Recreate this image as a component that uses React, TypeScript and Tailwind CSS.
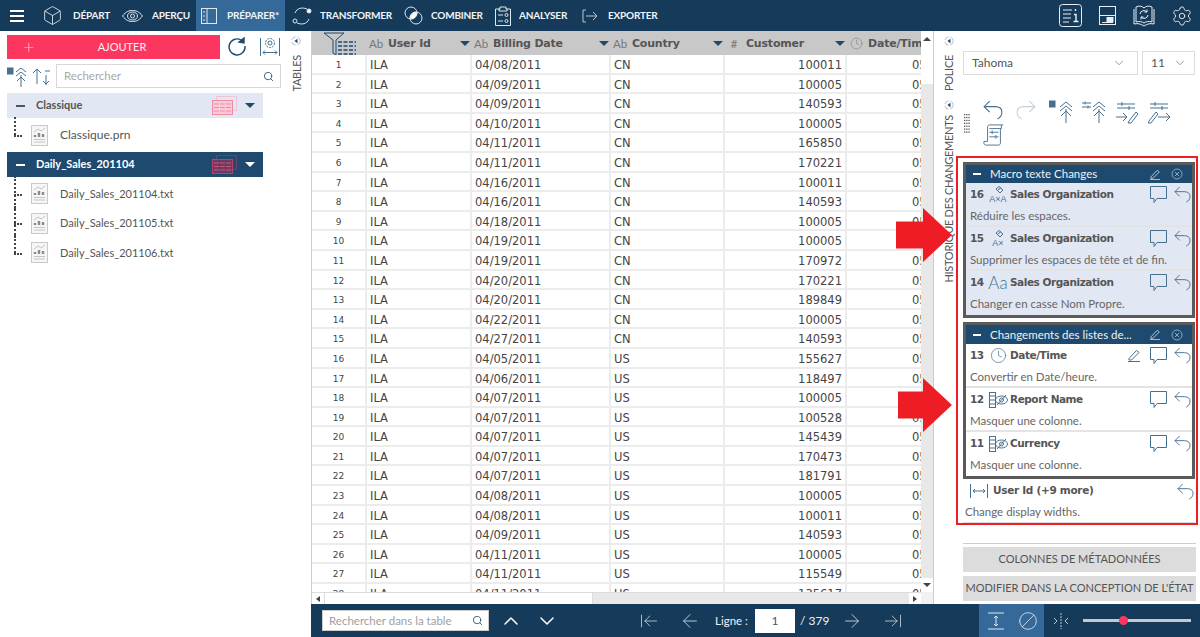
import { Search, ChevronDown, ChevronUp, Clock, Box, Settings, ArrowLeft, ArrowRight, ArrowLeftToLine, ArrowRightToLine, Ban } from 'lucide-react';

const rows: [string, string, string][] = [
    ['04/08/2011', 'CN', '100011'], ['04/09/2011', 'CN', '100005'], ['04/09/2011', 'CN', '140593'],
    ['04/10/2011', 'CN', '100005'], ['04/11/2011', 'CN', '165850'], ['04/11/2011', 'CN', '170221'],
    ['04/16/2011', 'CN', '100011'], ['04/16/2011', 'CN', '140593'], ['04/18/2011', 'CN', '100005'],
    ['04/19/2011', 'CN', '100005'], ['04/19/2011', 'CN', '170972'], ['04/20/2011', 'CN', '170221'],
    ['04/20/2011', 'CN', '189849'], ['04/22/2011', 'CN', '100005'], ['04/27/2011', 'CN', '140593'],
    ['04/05/2011', 'US', '155627'], ['04/06/2011', 'US', '118497'], ['04/07/2011', 'US', '100005'],
    ['04/07/2011', 'US', '100528'], ['04/07/2011', 'US', '145439'], ['04/07/2011', 'US', '170473'],
    ['04/07/2011', 'US', '181791'], ['04/08/2011', 'US', '100005'], ['04/08/2011', 'US', '100011'],
    ['04/09/2011', 'US', '140593'], ['04/11/2011', 'US', '100005'], ['04/11/2011', 'US', '115549'],
    ['04/11/2011', 'US', '135617'],
];

const Caret = ({ className = '' }: { className?: string }) => (
    <span className={`inline-block w-0 h-0 border-l-[5px] border-r-[5px] border-t-[5px] border-l-transparent border-r-transparent ${className}`} />
);

const CollapseDot = () => (
    <svg width="10" height="10" viewBox="0 0 10 10" className="text-[#1f4a70]">
        <circle cx="5" cy="5" r="4.2" fill="none" stroke="#9fb0c0" strokeWidth="0.8" strokeDasharray="5 2" />
        <path d="M6.5 2.8 L3.4 5 L6.5 7.2 Z" fill="currentColor" />
    </svg>
);

const UndoIcon = ({ w = 17, color = '#47708f' }: { w?: number; color?: string }) => (
    <svg width={w} height={w} viewBox="0 0 18 18" fill="none" stroke={color} strokeWidth="1">
        <path d="M6 1L1 6L6 11M1 6H11C15 6 17 8 17 11C17 14 15 16 13 17" />
    </svg>
);

const RedoIcon = ({ w = 20, color = '#c6d1da' }: { w?: number; color?: string }) => (
    <svg width={w} height={w} viewBox="0 0 18 18" fill="none" stroke={color} strokeWidth="1">
        <path d="M12 1L17 6L12 11M17 6H7C3 6 1 8 1 11C1 14 3 16 5 17" />
    </svg>
);

const CommentIcon = () => (
    <svg width="17" height="17" viewBox="0 0 17 17" fill="none" stroke="#47708f">
        <path d="M.5 .5H16.5V12.5H7L4 16.5V12.5H.5Z" />
    </svg>
);

const PencilLine = ({ w = 13, color = '#47708f' }: { w?: number; color?: string }) => (
    <svg width={w} height={w} viewBox="0 0 13 13" fill="none" stroke={color}>
        <path d="M1 9.5L8.5 1.5L11 3.5L3.5 11H1ZM0 12.5H12" />
    </svg>
);

const NavItem = ({ icon, label, w, iconW, active, className = '' }: { icon: React.ReactNode; label: string; w: number; iconW: number; active?: boolean; className?: string }) => (
    <div className={`h-full shrink-0 flex items-center ${active ? 'bg-[#34699a]' : ''} ${className}`} style={{ width: w }}>
        <div className="shrink-0 flex items-center" style={{ width: iconW }}>{icon}</div>
        <span className="text-[10px] tracking-[-0.2px] font-bold text-[#f0f4f8] whitespace-nowrap">{label}</span>
    </div>
);

const TableMini = ({ dark }: { dark?: boolean }) => (
    <svg width="25" height="19" viewBox="0 0 25 19">
        <rect x="4.5" y="0.5" width="20" height="14" fill="none" stroke={dark ? '#b9406a' : '#f5a5b9'} strokeWidth="1" strokeDasharray="1 1" />
        <rect x="0.5" y="4.5" width="20" height="14" fill={dark ? '#6d3a60' : '#f9ccd7'} stroke={dark ? '#b9406a' : '#f28aa4'} />
        {[8, 11.5, 15].map((y) => <path key={y} d={`M2 ${y}H19`} stroke={dark ? '#c45a82' : '#f28aa4'} strokeWidth="1" strokeDasharray="5 1" />)}
    </svg>
);

const FileIcon = () => (
    <svg width="17" height="21" viewBox="0 0 17 21">
        <rect x="0.5" y="0.5" width="16" height="20" fill="#f6f6f6" stroke="#c9c9c9" />
        <path d="M3 7 L7 4 L10 6 L14 3" fill="none" stroke="#c4c4c4" />
        <path d="M4 12V10M8 12V8M12 12V9" stroke="#8a8a8a" strokeWidth="2.4" />
        <path d="M3 14.5H14M3 17H14" stroke="#c4c4c4" />
    </svg>
);

const TreeLine = ({ last }: { last?: boolean }) => (
    <div className="relative w-[16px] h-full shrink-0">
        <div className={`absolute left-[7px] top-[-3px] border-l-2 border-dotted border-[#444] ${last ? 'bottom-1/2' : 'bottom-0'}`} />
        <div className="absolute left-[7px] top-1/2 w-[8px] border-t-2 border-dotted border-[#444]" />
    </div>
);

const FileRow = ({ name, last, small }: { name: string; last?: boolean; small?: boolean }) => (
    <div className="flex items-center h-[29.5px] pl-[7px]">
        <TreeLine last={last} />
        <div className="ml-[8px] mr-[12px] flex"><FileIcon /></div>
        <span className={`${small ? 'text-[11px]' : 'text-[12px]'} text-[#555]`}>{name}</span>
    </div>
);

const GroupRow = ({ name, selected }: { name: string; selected?: boolean }) => (
    <div className={`ml-[7px] mr-[20px] h-[25px] flex items-center ${selected ? 'bg-[#1f4a70] text-white' : 'bg-[#e1e8f3] text-[#555]'}`}>
        <span className="ml-[9px] w-[9px] h-[2px] bg-current" />
        <span className="ml-[11px] flex-1 text-[11px] font-bold">{name}</span>
        <TableMini dark={selected} />
        <Caret className={`ml-[8px] mr-[8px] ${selected ? 'border-t-white' : 'border-t-[#1f4a70]'}`} />
    </div>
);

const Th = ({ type, label, w, caret = true }: { type: React.ReactNode; label: string; w: number; caret?: boolean }) => (
    <div className="h-full shrink-0 flex items-center relative overflow-hidden" style={{ width: w }}>
        <span className="w-[18px] shrink-0 pt-[1px] text-[11.5px] text-[#777] flex justify-center">{type}</span>
        <span className="ml-[3px] pt-[2px] text-[11px] tracking-[-0.2px] font-bold text-[#555] whitespace-nowrap font-['DejaVu_Sans',sans-serif]">{label}</span>
        {caret && <Caret className="absolute right-[2px] top-[10px] border-t-[#1f4a70]" />}
    </div>
);

const HistoryRow = ({ num, icon, title, desc, edit, hasLine = true }: { num: string; icon: React.ReactNode; title: string; desc: string; edit?: boolean; hasLine?: boolean }) => (
    <div className={`h-[44px] relative ${hasLine ? 'border-b-2 border-[#e4e4e4]' : ''}`}>
        <div className="flex items-center h-[23px] pl-[4px]">
            <span className="text-[10.5px] tracking-[-0.5px] font-bold text-[#555] w-[16px] font-['DejaVu_Sans',sans-serif]">{num}</span>
            <span className="w-[24px] flex justify-center text-[#47708f]">{icon}</span>
            <span className="text-[10.5px] font-bold text-[#555] font-['DejaVu_Sans',sans-serif] tracking-[-0.45px] flex-1">{title}</span>
            {edit && <span className="flex mr-[9px]"><PencilLine /></span>}
            <span className="flex mr-[7px]"><CommentIcon /></span>
            <span className="flex mr-[1px]"><UndoIcon /></span>
        </div>
        <div className="pl-[4px] pt-[1px] text-[11.5px] text-[#666] leading-[18px] whitespace-nowrap">{desc}</div>
    </div>
);

const GroupHeader = ({ title, h }: { title: string; h: number }) => (
    <div className="bg-[#1f4a70] flex items-center text-white" style={{ height: h }}>
        <span className="ml-[7px] w-[8px] h-[2px] bg-white" />
        <span className="ml-[9px] flex-1 text-[11.5px] text-[#eef2f6] whitespace-nowrap">{title}</span>
        <span className="flex mr-[10px]"><PencilLine w={11} color="#cbd6e0" /></span>
        <svg width="12" height="12" viewBox="0 0 12 12" className="mr-[9px]">
            <circle cx="6" cy="6" r="5" fill="none" stroke="#8ea4b8" />
            <path d="M4 4L8 8M8 4L4 8" stroke="#8ea4b8" />
        </svg>
    </div>
);

const HideColIcon = () => (
    <svg width="19" height="16" viewBox="0 0 19 16" fill="none" stroke="currentColor">
        <rect x="0.5" y="0.5" width="6" height="15" />
        <path d="M1 4H6M1 8H6M1 12H6" />
        <ellipse cx="12.5" cy="8" rx="6" ry="4" />
        <circle cx="12.5" cy="8" r="2" />
        <path d="M8 13L17 3" />
    </svg>
);

const TextOpIcon = ({ label }: { label: string }) => (
    <span className="relative w-[20px] h-[18px] flex items-end justify-center">
        <svg width="9" height="8" viewBox="0 0 9 8" fill="none" stroke="#47708f" className="absolute left-[7px] top-0"><path d="M1 3L4 0.5L8 4L5 7Z" /><path d="M2.5 4.5L6 1.5" /></svg>
        <span className="text-[9px] leading-none text-[#47708f] font-['Liberation_Sans',sans-serif]">{label}</span>
    </span>
);

const UpTreeIcon = ({ left }: { left: React.ReactNode }) => (
    <svg width="30" height="24" viewBox="0 0 30 24" fill="none" stroke="#47708f" strokeWidth="1">
        {left}
        <path d="M11 7L17 2L23 7M11 11L17 6L23 11M17 9V23M12 16L17 11L22 16" />
    </svg>
);

const Grip = () => (
    <svg width="6" height="20" viewBox="0 0 6 20" fill="#555">
        {[0, 1, 2, 3, 4, 5, 6].map((r) => [0, 1, 2].map((c) => <rect key={`${r}-${c}`} x={c * 2.2} y={r * 2.9} width="1.3" height="1.3" />))}
    </svg>
);

export default function App() {
    return (
        <div className="relative w-[1200px] h-[637px] overflow-hidden bg-white flex flex-col font-['Lato',sans-serif]">
            {/* Barre du haut */}
            <div className="h-[31px] shrink-0 bg-[#163a59] flex items-center">
                <div className="w-[14px] ml-[10px] mr-[20px] flex flex-col gap-[3px]">
                    <span className="h-[2px] bg-white" /><span className="h-[2px] bg-white" /><span className="h-[2px] bg-white" />
                </div>
                <NavItem w={78} iconW={29} icon={<Box size={21} strokeWidth={1} className="text-[#dfe7ee] -ml-[2px]" />} label="DÉPART" />
                <NavItem w={74} iconW={30} icon={
                    <svg width="21" height="12" viewBox="0 0 21 12" fill="none" stroke="#dfe7ee"><path d="M.5 6C4 1.5 7 .5 10.5 .5S17 1.5 20.5 6C17 10.5 14 11.5 10.5 11.5S4 10.5 .5 6Z" /><ellipse cx="10.5" cy="6" rx="5" ry="4" /><circle cx="10.5" cy="6" r="2" /></svg>
                } label="APERÇU" />
                <NavItem active w={89} iconW={26} className="pl-[5px]" icon={
                    <svg width="16" height="16" viewBox="0 0 16 16" fill="none" stroke="#dfe7ee"><rect x=".5" y=".5" width="15" height="15" /><path d="M6 .5V15.5M2 4H4M2 8H4M2 12H4" /></svg>
                } label="PRÉPARER*" />
                <NavItem w={112} iconW={28} className="ml-[7px]" icon={
                    <svg width="20" height="20" viewBox="0 0 20 20" fill="none" stroke="#dfe7ee"><path d="M3 7C5 2 10 1 15 3M17 13C15 18 10 19 5 17" /><circle cx="17" cy="5" r="2" fill="#fff" /><circle cx="3" cy="15" r="2" /></svg>
                } label="TRANSFORMER" />
                <NavItem w={91} iconW={27} icon={
                    <svg width="19" height="19" viewBox="0 0 19 19" fill="none" stroke="#dfe7ee"><circle cx="7" cy="7" r="6" /><circle cx="12" cy="12" r="6" /><path d="M12.9 6.1A6 6 0 0 1 6.1 12.9A6 6 0 0 1 12.9 6.1Z" fill="#fff" /></svg>
                } label="COMBINER" />
                <NavItem w={87} iconW={24} icon={
                    <svg width="16" height="20" viewBox="0 0 16 20" fill="none" stroke="#dfe7ee"><path d="M5 3H.5V19.5H15.5V3H11M5 3V1H11V3H12V5H4V3Z" /><path d="M3 9H8M3 15H8" /><circle cx="11.5" cy="9" r="1.5" /><circle cx="11.5" cy="15" r="1.5" /></svg>
                } label="ANALYSER" />
                <NavItem w={90} iconW={26} icon={
                    <svg width="16" height="14" viewBox="0 0 16 14" fill="none" stroke="#b9c6d2"><path d="M4 1H1V13H4M4 7H15M11 3L15 7L11 11" /></svg>
                } label="EXPORTER" />
                <div className="ml-auto flex items-center">
                    <svg width="23" height="23" viewBox="0 0 23 23" fill="none" stroke="#e8eef3" className="mr-[17px]"><rect x=".5" y=".5" width="22" height="22" rx="3" /><path d="M4 6H13M4 10H12M4 14H12M4 18H10" /><path d="M16.5 5V7M15 10.5H17V17M14.5 17.5H19.5" strokeWidth="1.4" /></svg>
                    <svg width="17" height="19" viewBox="0 0 17 19" fill="none" stroke="#e8eef3" className="mr-[16px]"><rect x=".5" y=".5" width="16" height="18" /><path d="M.5 9.5H16.5" /><rect x="8" y="11.5" width="6" height="4" fill="#e8eef3" /><path d="M3 16.5H14" /></svg>
                    <svg width="24" height="22" viewBox="0 0 24 22" fill="none" stroke="#e8eef3" className="mr-[15px]"><path d="M4 2C7 .5 10 1 12 3C14 1 17 .5 20 2V17C17 16 14 16.5 12 18C10 16.5 7 16 4 17Z" /><path d="M2 4V19C6 18 9 19 12 21C15 19 18 18 22 19V4" /><path d="M8 9A4 4 0 0 1 15 7M16 10A4 4 0 0 1 9 12" /><path d="M15 4.5V7H12.5M9 14.5V12H11.5" /></svg>
                    <Settings size={22} strokeWidth={1} className="text-[#e8eef3] mr-[7px]" />
                </div>
            </div>

            <div className="flex-1 flex min-h-0">
                {/* Panneau gauche */}
                <div className="w-[312px] shrink-0 flex border-r border-[#f7b9c8]">
                    <div className="w-[283px] shrink-0">
                        <div className="flex items-center h-[28px] pt-[4px] pl-[7px]">
                            <div className="w-[213px] h-[24px] bg-[#fd365f] flex items-center relative shrink-0">
                                <span className="absolute left-[16px] top-[-2px] text-[#ffc0cd] text-[20px] font-light leading-[26px]">+</span>
                                <span className="w-full pl-[17px] text-center text-[11px] text-[#fdeef1]">AJOUTER</span>
                            </div>
                            <svg width="20" height="20" viewBox="0 0 20 20" fill="none" stroke="#1f4a70" strokeWidth="1.4" className="ml-[7px] shrink-0">
                                <path d="M14 3A8 8 0 1 0 18 9" />
                                <path d="M12 5L17 6L17 1Z" fill="#1f4a70" />
                            </svg>
                            <svg width="20" height="20" viewBox="0 0 20 20" fill="none" stroke="#47708f" className="ml-[13px] shrink-0">
                                <path d="M.5 1V19M19.5 1V19M3 15.5H17M5 13.5L3 15.5L5 17.5M15 13.5L17 15.5L15 17.5" />
                                <circle cx="10" cy="6" r="2" /><circle cx="10" cy="6" r="4.5" strokeDasharray="2 1" />
                            </svg>
                        </div>
                        <div className="flex items-center mt-[5px] h-[24px] pl-[7px]">
                            <svg width="20" height="21" viewBox="0 0 20 21" fill="none" stroke="#47708f" className="shrink-0">
                                <rect x="0" y="2" width="2.5" height="2.5" fill="#47708f" /><rect x="3.5" y="2" width="2.5" height="2.5" fill="#47708f" /><rect x="0" y="5.5" width="2.5" height="2.5" fill="#47708f" /><rect x="3.5" y="5.5" width="2.5" height="2.5" fill="#47708f" />
                                <path d="M9 6L14 2L19 6M9 10L14 6L19 10M14 9V21M10 15L14 11L18 15" />
                            </svg>
                            <svg width="19" height="18" viewBox="0 0 19 18" fill="none" stroke="#47708f" className="ml-[5px] shrink-0">
                                <path d="M5 17V2M1 6L5 2L9 6M13 4H18M14 8V18M11 14L14 17L17 14" />
                            </svg>
                            <div className="ml-[5px] w-[225px] h-[24px] border border-[#d8d8d8] flex items-center pl-[7px] pr-[6px] shrink-0">
                                <span className="flex-1 text-[11.5px] text-[#a8a8a8]">Rechercher</span>
                                <Search size={11} strokeWidth={2} className="text-[#35566f]" />
                            </div>
                        </div>
                        <div className="mt-[5px]"><GroupRow name="Classique" /></div>
                        <div className="h-[34px] flex flex-col justify-center"><FileRow name="Classique.prn" last /></div>
                        <GroupRow name="Daily_Sales_201104" selected />
                        <div className="mt-[2px]">
                            <FileRow name="Daily_Sales_201104.txt" small />
                            <FileRow name="Daily_Sales_201105.txt" small />
                            <FileRow name="Daily_Sales_201106.txt" small last />
                        </div>
                    </div>
                    <div className="w-[26px] flex flex-col items-center pt-[5px]">
                        <CollapseDot />
                        <span className="mt-[9px] text-[11px] tracking-[-0.3px] leading-none text-[#555] [writing-mode:vertical-rl] rotate-180">TABLES</span>
                    </div>
                </div>

                {/* Table */}
                <div className="flex-1 min-w-0 flex pb-[33px]">
                    <div className="w-[609px] shrink-0 flex flex-col">
                        <div className="h-[24px] shrink-0 bg-[#c8c8c8] flex">
                            <div className="w-[55px] shrink-0 flex justify-center items-center">
                                <svg width="32" height="23" viewBox="0 0 32 23" fill="none" stroke="#1f4a70">
                                    <path d="M0 1H20L12 8V23L9 21V8Z" />
                                    <path d="M14 10H32M14 14H32M14 18H32M14 22H32" strokeDasharray="4 1.5" strokeWidth="1.5" />
                                </svg>
                            </div>
                            <Th type="Ab" label="User Id" w={105} />
                            <Th type="Ab" label="Billing Date" w={139} />
                            <Th type="Ab" label="Country" w={114} />
                            <Th type="#" label="Customer" w={122} />
                            <Th type={<Clock size={13} strokeWidth={1} />} label="Date/Time" w={74} caret={false} />
                        </div>
                        <div className="flex-1 min-h-0 overflow-hidden font-['DejaVu_Sans',sans-serif] text-[11.5px] text-[#444]">
                            {rows.map((r, i) => (
                                <div key={i} className="h-[19.6px] flex border-b-2 border-[#ececec] leading-[20px]">
                                    <div className="w-[55px] shrink-0 text-center text-[9px] border-r-2 border-[#ececec]">{i + 1}</div>
                                    <div className="w-[105px] shrink-0 pl-[3px] border-r-2 border-[#ececec]">ILA</div>
                                    <div className="w-[139px] shrink-0 pl-[3px] border-r-2 border-[#ececec]">{r[0]}</div>
                                    <div className="w-[114px] shrink-0 pl-[3px] border-r-2 border-[#ececec]">{r[1]}</div>
                                    <div className="w-[122px] shrink-0 pr-[3px] text-right border-r-2 border-[#ececec]">{r[2]}</div>
                                    <div className="w-[74px] shrink-0 pl-[65px] overflow-hidden">05</div>
                                </div>
                            ))}
                        </div>
                        {/* barre horizontale */}
                        <div className="h-[12px] shrink-0 bg-[#e8e8e8] flex items-center border-t border-[#dcdcdc]">
                            <div className="w-[12px] h-full bg-white flex items-center justify-center"><span className="border-y-[3px] border-r-[4px] border-y-transparent border-r-[#444]" /></div>
                            <div className="w-[269px] h-full bg-white border-x border-[#dcdcdc]" />
                            <div className="ml-auto w-[12px] h-full bg-white flex items-center justify-center"><span className="border-y-[3px] border-l-[4px] border-y-transparent border-l-[#444]" /></div>
                        </div>
                    </div>
                    {/* barre verticale */}
                    <div className="flex-1 bg-[#e8e8e8] flex flex-col">
                        <div className="h-[15px] bg-white flex items-center justify-center"><span className="border-x-[4px] border-b-[4px] border-x-transparent border-b-[#444]" /></div>
                        <div className="h-[38px] bg-white" />
                        <div className="mt-auto h-[14px] bg-white flex items-center justify-center"><span className="border-x-[4px] border-t-[4px] border-x-transparent border-t-[#444]" /></div>
                        <div className="h-[12px] bg-[#f2f2f2]" />
                    </div>
                </div>

                {/* Panneau droit */}
                <div className="w-[267px] shrink-0 border-l border-[#f7b9c8] flex">
                    <div className="w-[29px] shrink-0 flex flex-col items-center pt-[5px]">
                        <CollapseDot />
                        <span className="mt-[9px] text-[11px] tracking-[-0.3px] leading-none text-[#555] [writing-mode:vertical-rl] rotate-180">POLICE</span>
                        <div className="mt-[9px]"><CollapseDot /></div>
                        <span className="mt-[5px] text-[11px] tracking-[-0.3px] leading-none text-[#555] [writing-mode:vertical-rl] rotate-180 whitespace-nowrap">HISTORIQUE DES CHANGEMENTS</span>
                    </div>
                    <div className="flex-1 min-w-0 pt-[20px] flex flex-col">
                        <div className="flex gap-[4px] text-[12px] text-[#555]">
                            <div className="w-[175px] h-[24px] border border-[#dcdcdc] flex items-center justify-between pl-[8px] pr-[11px]">Tahoma<ChevronDown size={14} strokeWidth={1} /></div>
                            <div className="w-[53px] h-[24px] border border-[#dcdcdc] flex items-center justify-between pl-[8px] pr-[7px]">11<ChevronDown size={14} strokeWidth={1} /></div>
                        </div>
                        <div className="flex mt-[25px] h-[46px]">
                            <div className="ml-[1px] mt-[14px]"><Grip /></div>
                            <div className="ml-[13px] flex flex-wrap gap-x-[3px] w-[200px] h-[46px] content-start">
                                <div className="w-[30px] h-[24px]"><UndoIcon w={20} /></div>
                                <div className="w-[30px] h-[24px]"><RedoIcon /></div>
                                <UpTreeIcon left={<><rect x="0" y="1" width="2.5" height="2.5" fill="#47708f" /><rect x="3.5" y="1" width="2.5" height="2.5" fill="#47708f" /><rect x="0" y="4.5" width="2.5" height="2.5" fill="#47708f" /><rect x="3.5" y="4.5" width="2.5" height="2.5" fill="#47708f" /></>} />
                                <UpTreeIcon left={<path d="M0 3H9M0 7H9M3 1.5V4.5M6 5.5V8.5" />} />
                                <svg width="30" height="24" viewBox="0 0 30 24" fill="none" stroke="#47708f"><path d="M2 4H20M2 8H20M7 2V6M14 6V10M1 17H12M8 13L12 17L8 21M14 21L21 12L23 14L16 23L13 23Z" /></svg>
                                <svg width="30" height="24" viewBox="0 0 30 24" fill="none" stroke="#47708f"><path d="M2 4H20M2 8H20M7 2V6M14 6V10M10 17H22M18 13L22 17L18 21M1 21L8 12L10 14L3 23L0 23Z" /></svg>
                                <svg width="22" height="22" viewBox="0 0 24 24" fill="none" stroke="#47708f"><path d="M5 19V3C5 2 6 1 7 1H22M20 1V5H7M5 19H1V21C1 22 2 23 3 23H17C18 23 19 22 19 21V5" /><path d="M7 9H17M7 14H17M10 7V11M14 12V16" /></svg>
                            </div>
                        </div>
                        <div className="mt-[10px] mr-[2px] -ml-[7px] border-2 border-[#ee1c25] h-[369px] pl-[5px] pr-[1px] pt-[4px]">
                            <div className="border-[3px] border-[#5a5a5a] bg-[#e1e8f3] h-[156px]">
                                <GroupHeader title="Macro texte Changes" h={18} />
                                <HistoryRow num="16" icon={<TextOpIcon label="A×A" />} title="Sales Organization" desc="Réduire les espaces." />
                                <HistoryRow num="15" icon={<TextOpIcon label="A×" />} title="Sales Organization" desc="Supprimer les espaces de tête et de fin." />
                                <HistoryRow num="14" icon={<span className="text-[17px] font-light leading-none">Aa</span>} title="Sales Organization" desc="Changer en casse Nom Propre." hasLine={false} />
                            </div>
                            <div className="mt-[4px] border-[3px] border-[#5a5a5a] bg-white h-[157px]">
                                <GroupHeader title="Changements des listes de..." h={19} />
                                <HistoryRow num="13" icon={<Clock size={17} strokeWidth={1} />} title="Date/Time" desc="Convertir en Date/heure." edit />
                                <HistoryRow num="12" icon={<HideColIcon />} title="Report Name" desc="Masquer une colonne." />
                                <HistoryRow num="11" icon={<HideColIcon />} title="Currency" desc="Masquer une colonne." hasLine={false} />
                            </div>
                            <div className="h-[44px] border-b border-[#dcdcdc]">
                                <div className="flex items-center h-[24px] pl-[7px]">
                                    <svg width="18" height="14" viewBox="0 0 18 14" fill="none" stroke="#47708f"><path d="M.5 0V14M17.5 0V14M3 7H15M5 5L3 7L5 9M13 5L15 7L13 9" /></svg>
                                    <span className="ml-[5px] flex-1 text-[10.5px] font-bold text-[#555] font-['DejaVu_Sans',sans-serif] tracking-[-0.3px]">User Id (+9 more)</span>
                                    <span className="flex mr-[1px]"><UndoIcon /></span>
                                </div>
                                <div className="pl-[2px] text-[11.5px] text-[#666] leading-[18px]">Change display widths.</div>
                            </div>
                        </div>
                        <div className="mt-[18px] border-t border-[#f7b9c8] mr-[4px]" />
                        <div className="mt-[3px] mr-[4px] h-[25px] bg-[#dcdcdc] flex items-center justify-center text-[11px] text-[#555]">COLONNES DE MÉTADONNÉES</div>
                        <div className="mt-[4px] mr-[4px] h-[25px] bg-[#dcdcdc] flex items-center justify-center text-[11px] text-[#555] whitespace-nowrap">MODIFIER DANS LA CONCEPTION DE L'ÉTAT</div>
                    </div>
                </div>
            </div>

            {/* Barre du bas */}
            <div className="absolute left-[311px] right-0 bottom-0 h-[33px] bg-[#163a59] flex items-center">
                <div className="ml-[11px] w-[167px] h-[21px] shrink-0 bg-white border border-[#ccc] flex items-center pl-[6px] pr-[5px]">
                    <span className="flex-1 text-[11.5px] text-[#a0a0a0] whitespace-nowrap">Rechercher dans la table</span>
                    <Search size={11} strokeWidth={2} className="text-[#35566f]" />
                </div>
                <ChevronUp size={24} strokeWidth={1.5} className="ml-[10px] text-white shrink-0" />
                <ChevronDown size={24} strokeWidth={1.5} className="ml-[12px] text-white shrink-0" />
                <ArrowLeftToLine size={20} strokeWidth={1} className="ml-[80px] text-[#c9d4de] shrink-0" />
                <ArrowLeft size={22} strokeWidth={1} className="ml-[20px] text-[#c9d4de] shrink-0" />
                <span className="ml-[14px] w-[40px] shrink-0 text-[11.5px] text-[#eef2f6]">Ligne :</span>
                <div className="w-[40px] h-[24px] shrink-0 bg-white text-center text-[12px] leading-[24px] text-[#555]">1</div>
                <span className="w-[44px] pl-[5px] shrink-0 text-[12px] text-[#eef2f6]">/ 379</span>
                <ArrowRight size={22} strokeWidth={1} className="ml-[2px] text-[#c9d4de] shrink-0" />
                <ArrowRightToLine size={20} strokeWidth={1} className="ml-[20px] text-[#c9d4de] shrink-0" />
                <div className="ml-[76px] h-full flex items-center shrink-0">
                    <div className="w-[33px] h-full bg-[#34699a] flex items-center justify-center">
                        <svg width="18" height="18" viewBox="0 0 18 18" fill="none" stroke="#dfe7ee"><path d="M1 1H17M1 17H17M9 4V14M7 6L9 4L11 6M7 12L9 14L11 12" /></svg>
                    </div>
                    <div className="w-[32px] h-full bg-[#34699a] flex items-center justify-center">
                        <Ban size={20} strokeWidth={1} className="text-[#dfe7ee] -scale-x-100" />
                    </div>
                </div>
                <svg width="16" height="16" viewBox="0 0 16 16" fill="none" stroke="#b9c6d2" className="ml-[9px] shrink-0"><path d="M8 0V16" strokeDasharray="2 1" /><path d="M1 5L4 8L1 11M15 5L12 8L15 11" /></svg>
                <div className="ml-[14px] w-[108px] h-[3px] bg-[#c8c8c8] relative shrink-0">
                    <span className="absolute left-[36px] -top-[3px] w-[9px] h-[9px] rounded-full bg-[#fd365f]" />
                </div>
            </div>

            {/* Flèches rouges */}
            <svg width="56" height="54" viewBox="0 0 56 54" className="absolute left-[896px] top-[208px]"><path d="M0 13.5H27V0L56 27L27 54V40.5H0Z" fill="#ee1c25" /></svg>
            <svg width="54" height="54" viewBox="0 0 54 54" className="absolute left-[898px] top-[378px]"><path d="M0 13.5H25V0L54 27L25 54V40.5H0Z" fill="#ee1c25" /></svg>
        </div>
    );
}
